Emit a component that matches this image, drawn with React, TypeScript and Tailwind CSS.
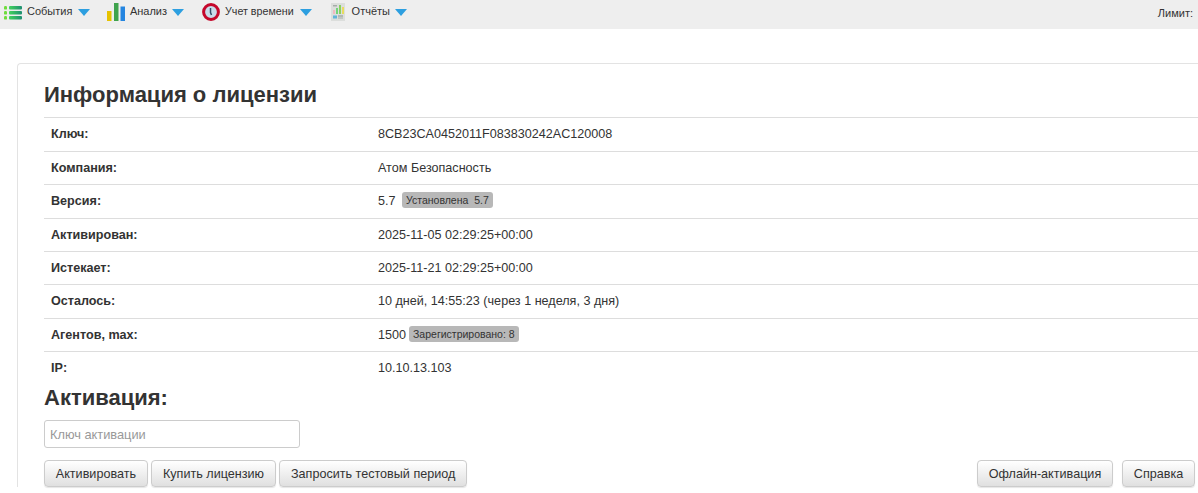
import React from 'react';

const rows: [string, React.ReactNode][] = [
  ['Ключ:', '8CB23CA0452011F083830242AC120008'],
  ['Компания:', 'Атом Безопасность'],
  ['Версия:', <>5.7 <span className="ml-[3px] inline-block rounded-[3px] bg-[#b8b8b8] px-[4px] align-[1px] text-[10.5px] leading-[16px]">Установлена&nbsp; 5.7</span></>],
  ['Активирован:', '2025-11-05 02:29:25+00:00'],
  ['Истекает:', '2025-11-21 02:29:25+00:00'],
  ['Осталось:', '10 дней, 14:55:23 (через 1 неделя, 3 дня)'],
  ['Агентов, max:', <>1500 <span className="-ml-[0.5px] inline-block rounded-[3px] bg-[#b8b8b8] px-[4px] align-[1px] text-[10.5px] leading-[16px]">Зарегистрировано: 8</span></>],
  ['IP:', '10.10.13.103'],
];

const EventsIcon = () => (
  <svg width="18" height="14" viewBox="0 0 18 14" className="mt-[1px]">
    <defs>
      <linearGradient id="bar">
        <stop offset="0" stopColor="#43d35c" />
        <stop offset="1" stopColor="#1f8f72" />
      </linearGradient>
    </defs>
    {[0, 5, 10].map((y) => (
      <g key={y}>
        <rect x="0" y={y} width="3" height="3.6" rx="1.2" fill="#6fdc3c" />
        <rect x="5" y={y} width="13" height="3.6" rx="1" fill="url(#bar)" />
      </g>
    ))}
  </svg>
);

const ChartIcon = () => (
  <svg width="18" height="18" viewBox="0 0 18 18">
    <rect x="0" y="8" width="4.5" height="10" fill="#e6c200" />
    <rect x="7" y="0" width="4.5" height="18" fill="#3fa34d" />
    <rect x="13.5" y="3.5" width="4.5" height="14.5" fill="#2485e0" />
  </svg>
);

const ClockIcon = () => (
  <svg width="18" height="18" viewBox="0 0 18 18">
    <circle cx="9" cy="9" r="7.4" fill="#c9dcea" stroke="#c5082b" strokeWidth="3" />
    <path d="M8.5 5V9.5L9.5 12" fill="none" stroke="#34506a" strokeWidth="1.5" />
  </svg>
);

const ReportIcon = () => (
  <svg width="14" height="18" viewBox="0 0 14 18">
    <rect width="14" height="18" fill="#dcdedc" />
    <rect x="2" y="2" width="4" height="1.5" fill="#a5ada8" />
    <rect x="2" y="7" width="2" height="4" fill="#f0b8c0" />
    <rect x="5" y="5" width="2" height="6" fill="#72d47a" />
    <rect x="8" y="2" width="2" height="9" fill="#8ad060" />
    <rect x="11" y="4" width="2" height="7" fill="#e8dc60" />
    <rect x="2" y="12.5" width="4" height="3" fill="#63b4d8" />
    <rect x="7" y="12.5" width="5" height="1" fill="#8a948e" />
    <rect x="7" y="14.5" width="5" height="1" fill="#a5ada8" />
  </svg>
);

const Caret = () => <span className="h-0 w-0 border-x-[6px] border-t-[7px] border-x-transparent border-t-[#2d9fe0]" />;

const menu: { icon: React.ReactNode; label: string; cls: string; textCls: string }[] = [
  { icon: <EventsIcon />, label: 'События', cls: 'ml-[4px]', textCls: 'ml-[5px] mr-[6px]' },
  { icon: <ChartIcon />, label: 'Анализ', cls: 'ml-[16.5px]', textCls: 'ml-[5px] mr-[5px]' },
  { icon: <ClockIcon />, label: 'Учет времени', cls: 'ml-[18px]', textCls: 'ml-[5px] mr-[6px] text-[10.7px]' },
  { icon: <ReportIcon />, label: 'Отчёты', cls: 'ml-[19px]', textCls: 'ml-[7px] mr-[5px]' },
];

const Btn = ({ children }: { children: React.ReactNode }) => (
  <button className="h-[27px] rounded-[4px] border border-[#ccc] bg-gradient-to-b from-white to-[#e0e0e0] px-[10.8px] text-[12.6px] leading-[18px] text-[#333] shadow-[0_1px_1px_rgba(0,0,0,0.1)]">
    {children}
  </button>
);

export default function App() {
  return (
    <div className="h-[493px] w-[1198px] overflow-hidden bg-white font-['Liberation_Sans',sans-serif] text-[12.6px] leading-[18.43px] text-[#333]">
      <div className="flex h-[29px] items-start bg-[#eeeeee] pt-[3px] text-[11px]">
        {menu.map((m) => (
          <div key={m.label} className={`flex h-[18px] items-center ${m.cls}`}>
            {m.icon}
            <span className={`-mt-[2px] ${m.textCls}`}>{m.label}</span>
            <Caret />
          </div>
        ))}
        <div className="ml-auto mt-[1px] pr-[5px]">Лимит:</div>
      </div>

      <div className="ml-[17px] mt-[34px] rounded-tl-[4px] border-l border-t border-[#e3e3e3] pl-[26px]">
        <h1 className="mt-[18px] mb-[9.3px] text-[22px] font-bold leading-[26px]">Информация о лицензии</h1>
        <table className="w-full border-collapse">
          <tbody>
            {rows.map(([k, v]) => (
              <tr key={k} className="border-t border-[#dddddd]">
                <th className="w-[327px] px-[7px] py-[7px] text-left font-bold">{k}</th>
                <td className="px-[7px] py-[7px]">{v}</td>
              </tr>
            ))}
          </tbody>
        </table>
        <h2 className="mb-[10.5px] mt-[1px] text-[22px] font-bold leading-[24px]">Активация:</h2>
        <input
          placeholder="Ключ активации"
          className="block h-[28px] w-[256px] rounded-[3px] border border-[#ccc] px-[5px] text-[12.8px] placeholder:text-[#999]"
        />
        <div className="mt-[12px] flex gap-[3.4px] pr-[3px]">
          <Btn>Активировать</Btn>
          <Btn>Купить лицензию</Btn>
          <Btn>Запросить тестовый период</Btn>
          <div className="ml-auto flex gap-[9px]">
            <Btn>Офлайн-активация</Btn>
            <Btn>Справка</Btn>
          </div>
        </div>
      </div>
    </div>
  );
}
